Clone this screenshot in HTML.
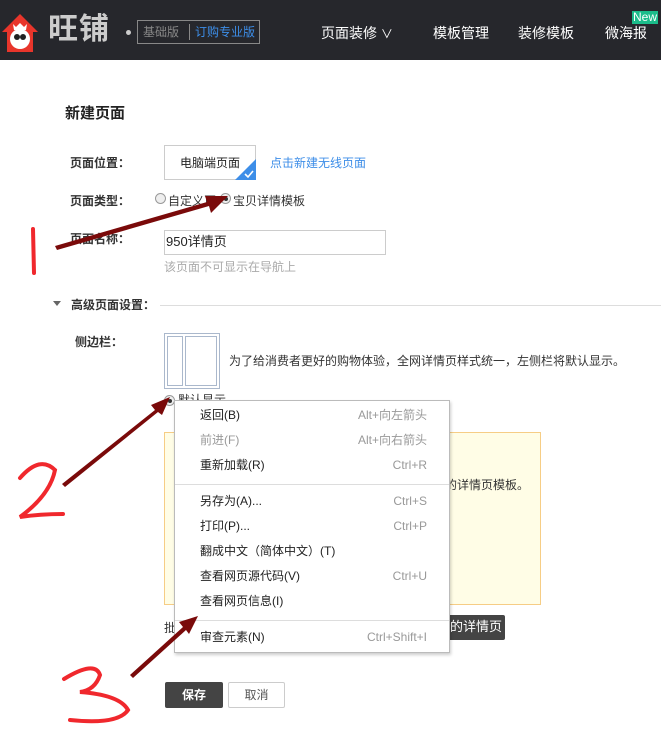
<!DOCTYPE html>
<html><head><meta charset="utf-8"><style>
*{margin:0;padding:0;box-sizing:border-box}
body{width:661px;height:755px;background:#fff;font-family:"Liberation Sans","Noto Sans CJK SC",sans-serif;font-size:12px;line-height:16px;color:#333;position:relative;overflow:hidden}
.a{position:absolute;white-space:nowrap}
.hdr{position:absolute;left:0;top:0;width:661px;height:60px;background:#26272c}
.top{position:absolute;left:0;top:0;width:661px;height:5px;background:#fdf6e3}
.nav{color:#fff;font-size:14px;line-height:18px}
.menu{position:absolute;left:174px;top:400px;width:276px;height:253px;background:#fff;border:1px solid #bbb;box-shadow:1px 2px 3px rgba(0,0,0,.2)}
.mi{position:absolute;left:25px;font-size:12px;line-height:16px;color:#222}
.sc{position:absolute;right:22px;font-size:12px;line-height:16px;color:#999}
.sep{position:absolute;left:0;width:274px;height:1px;background:#ddd}
</style></head><body>
<div class="top"></div>
<div class="hdr"></div>
<svg class="a" style="left:0;top:12px" width="40" height="42" viewBox="0 0 40 42">
<path d="M20 2 L38 20 L33 20 L33 40 L7 40 L7 20 L2 20 Z" fill="#e8352b"/>
<circle cx="20" cy="27" r="10" fill="#fff"/><circle cx="17" cy="25" r="3" fill="#222"/><circle cx="23" cy="25" r="3" fill="#222"/>
<path d="M13 12 l3 3 l4-4 l4 4 l3-3 l-1 6 h-12z" fill="#fff"/></svg>
<div class="a" style="left:48px;top:12px;font-size:30px;line-height:36px;font-weight:bold;color:#ccc;letter-spacing:1px">旺铺</div>
<div class="a" style="left:126px;top:30px;width:5px;height:5px;border-radius:50%;background:#ccc"></div>
<div class="a" style="left:137px;top:20px;width:123px;height:24px;border:1px solid #888"></div>
<div class="a" style="left:143px;top:24px;font-size:12px;color:#888">基础版</div>
<div class="a" style="left:189px;top:24px;width:1px;height:16px;background:#888"></div>
<div class="a" style="left:195px;top:24px;font-size:12px;color:#3d8ee8">订购专业版</div>
<div class="a nav" style="left:321px;top:24px">页面装修 <span style="font-size:12px">∨</span></div>
<div class="a nav" style="left:433px;top:24px">模板管理</div>
<div class="a nav" style="left:518px;top:24px">装修模板</div>
<div class="a nav" style="left:605px;top:24px">微海报</div>
<div class="a" style="left:632px;top:11px;background:#1bbc8a;color:#fff;font-size:12px;padding:0 1px;line-height:13px">New</div>

<div class="a" style="left:65px;top:105px;font-size:15px;line-height:18px;font-weight:bold;color:#222">新建页面</div>
<div class="a" style="left:70px;top:155px;font-weight:bold">页面位置：</div>
<div class="a" style="left:164px;top:145px;width:92px;height:35px;border:1px solid #ccc"></div>
<div class="a" style="left:180px;top:155px;color:#222">电脑端页面</div>
<svg class="a" style="left:235px;top:159px" width="21" height="21"><path d="M21 0 L21 21 L0 21Z" fill="#3d8ee8"/><path d="M10 15 l3 3 l5-6" stroke="#fff" stroke-width="1.6" fill="none"/></svg>
<div class="a" style="left:270px;top:155px;color:#3d8ee8">点击新建无线页面</div>
<div class="a" style="left:70px;top:193px;font-weight:bold">页面类型：</div>
<div class="a" style="left:155px;top:193px;width:11px;height:11px;border:1px solid #999;border-radius:50%;background:#eee"></div>
<div class="a" style="left:168px;top:193px">自定义页</div>
<div class="a" style="left:220px;top:193px;width:11px;height:11px;border:1px solid #999;border-radius:50%;background:#eee"></div>
<div class="a" style="left:223.5px;top:196.5px;width:4px;height:4px;border-radius:50%;background:#333"></div>
<div class="a" style="left:233px;top:193px">宝贝详情模板</div>
<div class="a" style="left:70px;top:231px;font-weight:bold">页面名称：</div>
<div class="a" style="left:164px;top:230px;width:222px;height:25px;border:1px solid #ccc"></div>
<div class="a" style="left:166px;top:234px;font-size:13px;color:#222">950详情页</div>
<div class="a" style="left:164px;top:259px;color:#aaa">该页面不可显示在导航上</div>
<div class="a" style="left:53px;top:301px;width:0;height:0;border-left:4px solid transparent;border-right:4px solid transparent;border-top:5px solid #666"></div>
<div class="a" style="left:71px;top:297px;font-weight:bold">高级页面设置：</div>
<div class="a" style="left:160px;top:305px;width:501px;height:1px;background:#ddd"></div>
<div class="a" style="left:75px;top:334px;font-weight:bold">侧边栏：</div>
<div class="a" style="left:164px;top:333px;width:56px;height:56px;border:1px solid #aab8cc"></div>
<div class="a" style="left:167px;top:336px;width:16px;height:50px;border:1px solid #aab8cc"></div>
<div class="a" style="left:185px;top:336px;width:32px;height:50px;border:1px solid #aab8cc"></div>
<div class="a" style="left:229px;top:353px">为了给消费者更好的购物体验，全网详情页样式统一，左侧栏将默认显示。</div>
<div class="a" style="left:164px;top:395px;width:11px;height:11px;border:1px solid #999;border-radius:50%;background:#eee"></div>
<div class="a" style="left:167.5px;top:398.5px;width:4px;height:4px;border-radius:50%;background:#333"></div>
<div class="a" style="left:178px;top:392px">默认显示</div>
<div class="a" style="left:164px;top:432px;width:377px;height:173px;background:#fffde6;border:1px solid #f6cd85"></div>
<div class="a" style="left:445px;top:477px">的详情页模板。</div>
<div class="a" style="left:164px;top:620px">批</div>
<div class="a" style="left:445px;top:615px;width:60px;height:25px;background:#444;border-radius:2px;color:#fff;font-size:13px;padding:4px 0 0 5px">的详情页</div>
<div class="a" style="left:165px;top:682px;width:58px;height:26px;background:#444;border-radius:2px;color:#fff;font-size:12px;text-align:center;line-height:26px;font-weight:bold">保存</div>
<div class="a" style="left:228px;top:682px;width:57px;height:26px;border:1px solid #ccc;border-radius:2px;color:#555;text-align:center;line-height:24px">取消</div>

<div class="menu">
<div class="mi" style="top:6px">返回(B)</div><div class="sc" style="top:6px">Alt+向左箭头</div>
<div class="mi" style="top:31px;color:#999">前进(F)</div><div class="sc" style="top:31px">Alt+向右箭头</div>
<div class="mi" style="top:56px">重新加载(R)</div><div class="sc" style="top:56px">Ctrl+R</div>
<div class="sep" style="top:83px"></div>
<div class="mi" style="top:92px">另存为(A)...</div><div class="sc" style="top:92px">Ctrl+S</div>
<div class="mi" style="top:117px">打印(P)...</div><div class="sc" style="top:117px">Ctrl+P</div>
<div class="mi" style="top:142px">翻成中文（简体中文）(T)</div>
<div class="mi" style="top:167px">查看网页源代码(V)</div><div class="sc" style="top:167px">Ctrl+U</div>
<div class="mi" style="top:192px">查看网页信息(I)</div>
<div class="sep" style="top:219px"></div>
<div class="mi" style="top:228px">审查元素(N)</div><div class="sc" style="top:228px">Ctrl+Shift+I</div>
</div>

<svg class="a" style="left:0;top:0" width="661" height="755">
<g fill="#7a0a0a">
<path d="M55 246 L207 202 L205 196 L228 196 L211 213 L209 206 L57 250Z"/>
<path d="M62 484 L155 410 L151 405 L170 397 L162 415 L158 412 L65 487Z"/>
<path d="M130 675 L183 627 L179 622 L198 616 L189 634 L186 630 L133 678Z"/>
</g>
<g stroke="#f0282d" stroke-width="4" fill="none" stroke-linecap="round">
<path d="M33 229 L34 273"/>
<path d="M20 478 Q40 455 55 470 Q50 495 20 517 Q40 514 63 514"/>
<path d="M64 679 Q95 660 100 675 Q95 690 80 692 Q120 695 128 710 Q118 725 70 720"/>
</g>
</svg>
</body></html>
